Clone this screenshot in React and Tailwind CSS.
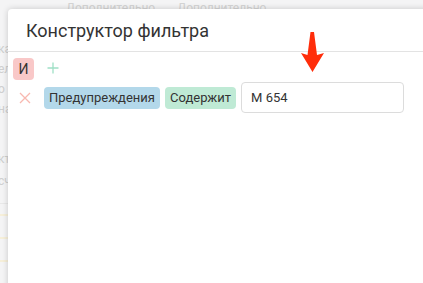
const App = () => {
  return (
    <div className="relative w-[423px] h-[283px] overflow-hidden bg-[#f4f4f5] font-['Roboto',sans-serif]">
      {/* Faded page behind the dialog */}
      <div className="flex gap-[22px] pl-[66px] pt-[1px] text-[12px] leading-[14px] text-[#d4d4d4]">
        <span>Дополнительно</span>
        <span>Дополнительно</span>
      </div>
      <div className="flex flex-col pt-[24px] text-[12px] leading-[20px] text-[#cfcfcf] -ml-[2px]">
        <span>ка</span>
        <span>ел</span>
        <span>о</span>
        <span>на</span>
        <span className="mt-[30px]">кт</span>
        <span className="mt-[2px]">сч</span>
      </div>
      <div className="flex flex-col w-[8px] mt-[12px]">
        <div className="h-px bg-[#e8e8e8]" />
        <div className="h-[2px] mt-[10px] bg-[#f6efd9]" />
        <div className="h-[2px] mt-[21px] bg-[#f6efd9]" />
        <div className="h-[2px] mt-[21px] bg-[#f6efd9]" />
      </div>

      {/* Dialog */}
      <div className="absolute left-[8px] top-[9px] w-[440px] h-[300px] bg-white rounded-tl-[4px] shadow-[0_0_6px_rgba(0,0,0,0.18)]">
        <div className="h-[43px] flex items-center pl-[18px] border-b border-[#e3e3e3]">
          <h2 className="text-[18px] text-[#333]">Конструктор фильтра</h2>
        </div>

        <div className="pl-[5px] pt-[6px]">
          <div className="flex items-center gap-[13px]">
            <span className="w-[21px] h-[22px] flex items-center justify-center rounded-[4px] bg-[#f9c8c8] text-[14px] text-[#333]">И</span>
            <svg width="12" height="12" viewBox="0 0 12 12" className="mt-[-2px]">
              <path d="M6 0.5v11M0.5 6h11" stroke="#9fe0c6" strokeWidth="1.3" />
            </svg>
          </div>

          <div className="flex items-center mt-[2px]">
            <svg width="12" height="12" viewBox="0 0 12 12" className="ml-[6px] mr-[13px]">
              <path d="M1 1l10 10M11 1L1 11" stroke="#f8b8b0" strokeWidth="1.3" />
            </svg>
            <span className="h-[22px] px-[5px] flex items-center rounded-[4px] bg-[#b3d8ea] text-[13px] text-[#333]">Предупреждения</span>
            <span className="ml-[5px] h-[22px] px-[5px] flex items-center rounded-[4px] bg-[#bfead5] text-[13px] text-[#333]">Содержит</span>
            <div className="ml-[5px] w-[163px] h-[31px] flex items-center px-[9px] border border-[#dcdcdc] rounded-[4px] text-[13px] text-[#333]">
              M 654
            </div>
          </div>
        </div>
      </div>

      {/* Red arrow annotation */}
      <svg className="absolute left-[300px] top-[30px]" width="26" height="44" viewBox="0 0 26 44">
        <path d="M10.5 2 L14 2 L17 25 L24 23 L12.5 42 L1 23 L7.5 25 Z" fill="#ff2d0a" />
      </svg>
    </div>
  );
};

export default App;
